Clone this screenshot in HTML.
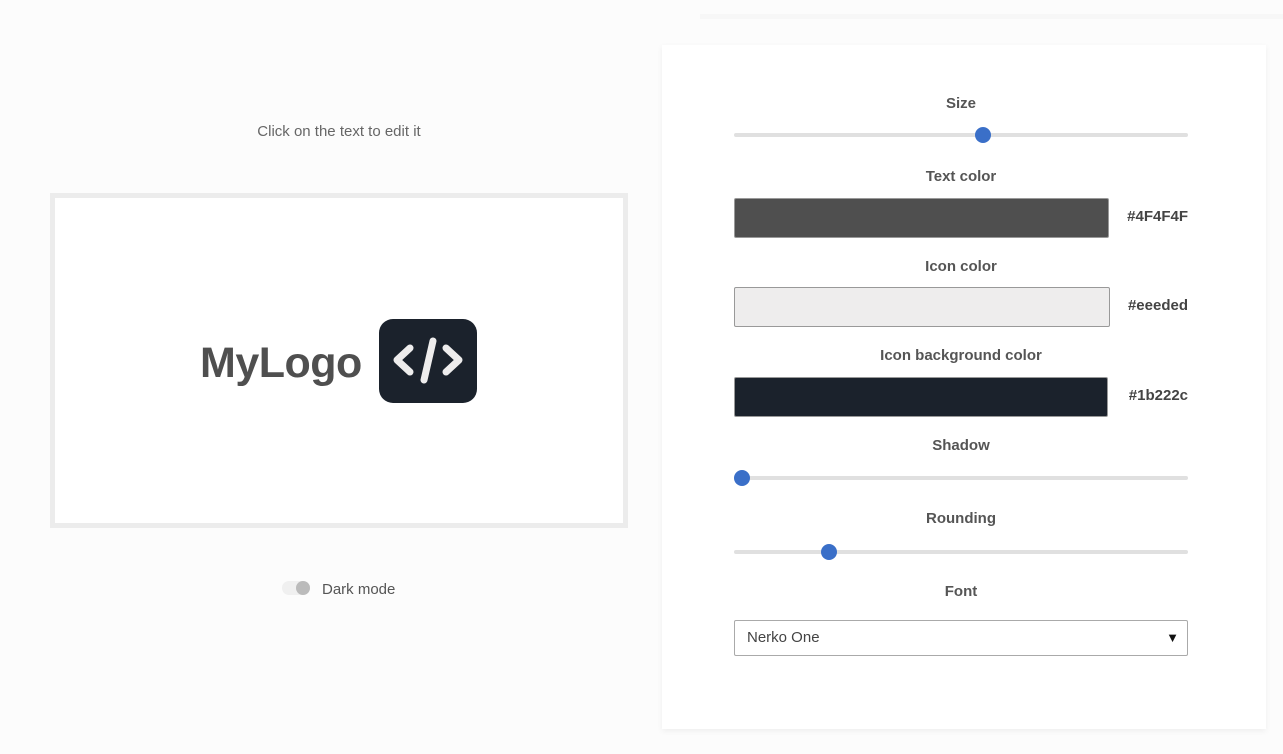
<!DOCTYPE html>
<html><head><style>
body{margin:0;width:1283px;height:754px;background:#fcfcfc;font-family:"Liberation Sans",Roboto,sans-serif;position:relative;overflow:hidden;color:#555}
.a{position:absolute}
.lbl{position:absolute;left:734px;width:454px;text-align:center;font-size:15px;font-weight:bold;color:#555}
.track{position:absolute;left:734px;width:454px;height:4px;background:#e0e0e0;border-radius:2px}
.th{position:absolute;width:16px;height:16px;border-radius:50%;background:#3a6fc8;top:-6px}
.sw{position:absolute;left:734px;height:38px;border:1px solid #999;border-radius:2px}
.hex{position:absolute;right:95px;font-size:15px;font-weight:bold;color:#444}
</style></head><body>
<div class="a" style="left:662px;top:45px;width:604px;height:684px;background:#fff;box-shadow:0 2px 6px rgba(0,0,0,0.06)"></div>
<div class="a" style="left:700px;top:14px;width:583px;height:5px;background:#f7f7f7"></div>
<div class="a" style="left:0;top:123px;width:678px;text-align:center;font-size:15px;color:#666">Click on the text to edit it</div>
<div class="a" style="left:50px;top:193px;width:568px;height:325px;border:5px solid #ececec;background:#fff"></div>
<div class="a" style="left:200px;top:339px;font-size:43px;font-weight:bold;color:#4f4f4f;font-family:'Liberation Sans',sans-serif;letter-spacing:-0.5px">MyLogo</div>
<div class="a" style="left:379px;top:319px;width:98px;height:84px;background:#1b222c;border-radius:14px">
<svg width="98" height="84" viewBox="0 0 98 84"><g fill="none" stroke="#eeeded" stroke-width="7" stroke-linecap="round" stroke-linejoin="round"><path d="M31 29 L18 41 L31 53"/><path d="M67 29 L80 41 L67 53"/><path d="M54 22 L45 61"/></g></svg></div>
<div class="a" style="left:282px;top:581px;width:28px;height:14px;border-radius:7px;background:#f0f0f0"></div>
<div class="a" style="left:296px;top:581px;width:14px;height:14px;border-radius:50%;background:#bbb"></div>
<div class="a" style="left:322px;top:581px;font-size:15px;color:#555">Dark mode</div>

<div class="lbl" style="top:95px">Size</div>
<div class="track" style="top:133px"><div class="th" style="left:241px"></div></div>
<div class="lbl" style="top:168px">Text color</div>
<div class="sw" style="top:198px;width:373px;background:#4f4f4f"></div>
<div class="hex" style="top:208px">#4F4F4F</div>
<div class="lbl" style="top:258px">Icon color</div>
<div class="sw" style="top:287px;width:374px;background:#eeeded"></div>
<div class="hex" style="top:297px">#eeeded</div>
<div class="lbl" style="top:347px">Icon background color</div>
<div class="sw" style="top:377px;width:372px;background:#1b222c"></div>
<div class="hex" style="top:387px">#1b222c</div>
<div class="lbl" style="top:437px">Shadow</div>
<div class="track" style="top:476px"><div class="th" style="left:0px"></div></div>
<div class="lbl" style="top:510px">Rounding</div>
<div class="track" style="top:550px"><div class="th" style="left:87px"></div></div>
<div class="lbl" style="top:583px">Font</div>
<div class="a" style="left:734px;top:620px;width:452px;height:34px;border:1px solid #aaa;border-radius:2px;background:#fff;font-size:15px;color:#444;line-height:34px"><span style="padding-left:12px">Nerko One</span><span style="position:absolute;right:8px;font-size:13px;color:#111">▼</span></div>
</body></html>
